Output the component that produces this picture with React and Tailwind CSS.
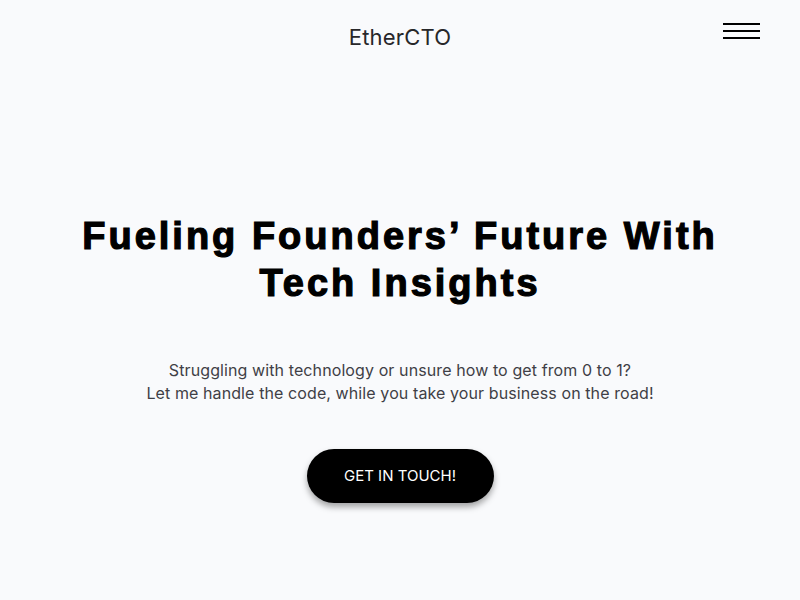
import React from 'react';

const App = () => {
    return (
        <div className="min-h-screen w-full bg-[#f9fafc] font-['Inter',sans-serif]">
            <header className="relative flex items-center justify-center h-[74px]">
                <span className="text-[22px] text-[#27272a] tracking-[0.2px]">EtherCTO</span>
                <button className="absolute right-[40px] top-[23px] flex flex-col gap-[5px] w-[37px]">
                    <span className="block h-[2px] w-full bg-black"></span>
                    <span className="block h-[2px] w-full bg-black"></span>
                    <span className="block h-[2px] w-full bg-black"></span>
                </button>
            </header>

            <main className="flex flex-col items-center text-center pt-[139px] px-4">
                <h1 className="font-['Liberation_Sans',sans-serif] font-black text-[38px] leading-[47px] text-black tracking-[3px] [-webkit-text-stroke:1.2px_black]">
                    Fueling Founders’ Future With
                    <br />
                    Tech Insights
                </h1>
                <p className="mt-[52px] text-[16px] leading-[23px] text-[#3f3f46] tracking-[0.1px]">
                    Struggling with technology or unsure how to get from 0 to 1?
                    <br />
                    Let me handle the code, while you take your business on the road!
                </p>
                <button className="mt-[44px] w-[187px] h-[54px] rounded-full bg-black text-white text-[15px] shadow-[0_4px_6px_rgba(0,0,0,0.35)]">
                    GET IN TOUCH!
                </button>
            </main>
        </div>
    );
};

export default App;
